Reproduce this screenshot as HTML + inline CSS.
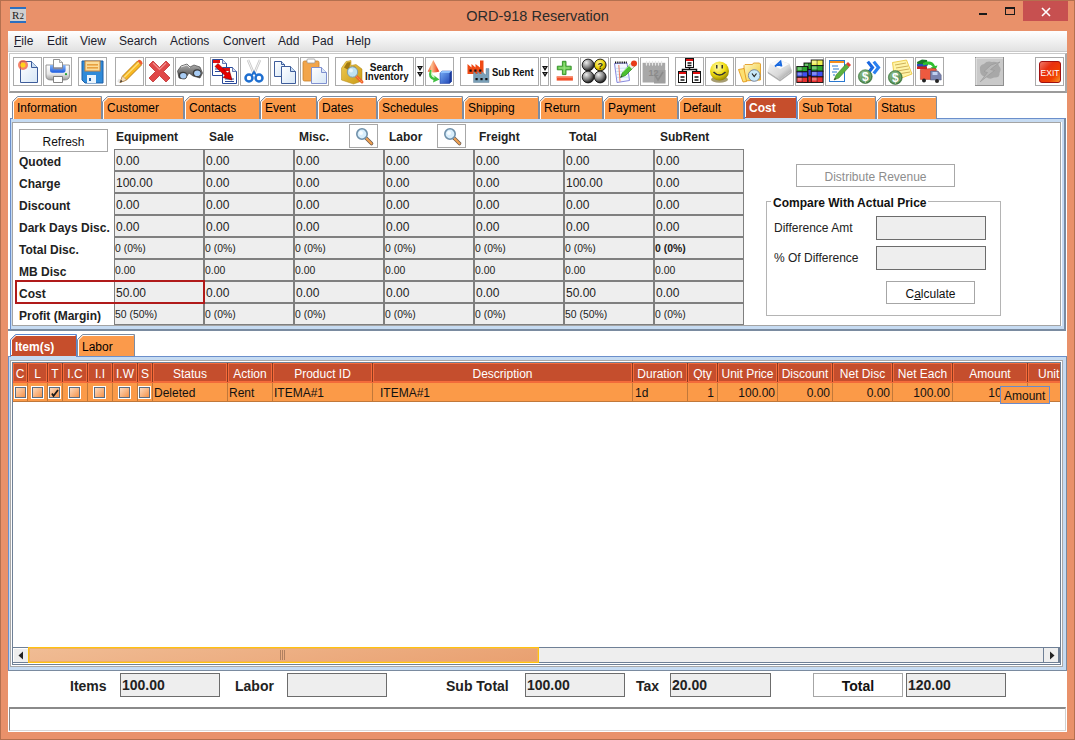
<!DOCTYPE html>
<html><head><meta charset="utf-8"><style>
*{margin:0;padding:0;box-sizing:border-box}
html,body{width:1075px;height:740px;overflow:hidden;background:#fff;font-family:"Liberation Sans",sans-serif;font-size:12px;color:#000}
.a{position:absolute}
.t{position:absolute;white-space:nowrap;line-height:1}
svg{position:absolute}
</style></head><body>
<div class="a" style="left:0px;top:0px;width:1075px;height:740px;background:#e9916a;border:1px solid #b4704f"></div>
<div class="t" style="left:0px;top:1px;width:1075px;text-align:center;font-size:14.5px;line-height:31px;color:#2b2b2b">ORD-918 Reservation</div>
<div class="a" style="left:1023px;top:1px;width:45px;height:20px;background:#c75050"></div>
<svg class="a" style="left:0;top:0" width="1075" height="31"><rect x="979" y="13" width="8" height="2" fill="#1a1a1a"/><rect x="1005.5" y="7.5" width="9" height="7" fill="none" stroke="#1a1a1a" stroke-width="1"/><rect x="1005" y="7" width="10" height="2" fill="#1a1a1a"/><path d="M1042 8 L1050 16 M1050 8 L1042 16" stroke="#fff" stroke-width="1.6"/></svg>
<div class="a" style="left:10px;top:7px;width:16px;height:16px;background:#d0d0d0;border-top:2px solid #2a6fc0;border-bottom:2px solid #2a6fc0;font-family:'Liberation Serif';font-size:11px;line-height:12px;color:#222;text-align:center">R<span style="font-size:9px">2</span></div>
<div class="a" style="left:8px;top:31px;width:1059px;height:20px;background:linear-gradient(#ffffff,#e2e2e2)"></div>
<div class="t" style="left:14px;top:35px;font-size:12px;color:#1c1c2c"><u>F</u>ile</div>
<div class="t" style="left:47px;top:35px;font-size:12px;color:#1c1c2c">Edit</div>
<div class="t" style="left:80px;top:35px;font-size:12px;color:#1c1c2c">View</div>
<div class="t" style="left:119px;top:35px;font-size:12px;color:#1c1c2c">Search</div>
<div class="t" style="left:170px;top:35px;font-size:12px;color:#1c1c2c">Actions</div>
<div class="t" style="left:223px;top:35px;font-size:12px;color:#1c1c2c">Convert</div>
<div class="t" style="left:278px;top:35px;font-size:12px;color:#1c1c2c">Add</div>
<div class="t" style="left:312px;top:35px;font-size:12px;color:#1c1c2c">Pad</div>
<div class="t" style="left:346px;top:35px;font-size:12px;color:#1c1c2c">Help</div>
<div class="a" style="left:8px;top:51px;width:1059px;height:1px;background:#c9c9c9"></div>
<div class="a" style="left:8px;top:52px;width:1059px;height:680px;background:#fff"></div>
<div class="a" style="left:9px;top:53px;width:1058px;height:40px;border:1px solid #c9c9c9;border-right:2px solid #a9a9a9;border-bottom:2px solid #9b9b9b;background:#fff"></div>
<svg width="0" height="0" style="position:absolute"><defs><linearGradient id="gdoc" x1="0" y1="0" x2="1" y2="1"><stop offset="0" stop-color="#ffffff"/><stop offset="1" stop-color="#d6e6f6"/></linearGradient><radialGradient id="gball" cx="0.35" cy="0.3" r="0.7"><stop offset="0" stop-color="#f0f0f0"/><stop offset="0.6" stop-color="#808080"/><stop offset="1" stop-color="#202020"/></radialGradient><radialGradient id="gyel" cx="0.4" cy="0.35" r="0.7"><stop offset="0" stop-color="#fff7a0"/><stop offset="0.6" stop-color="#e8d000"/><stop offset="1" stop-color="#8a7000"/></radialGradient><radialGradient id="gsmile" cx="0.4" cy="0.3" r="0.75"><stop offset="0" stop-color="#fffbb0"/><stop offset="0.55" stop-color="#f0dc10"/><stop offset="1" stop-color="#8a7a00"/></radialGradient><radialGradient id="gdollar" cx="0.4" cy="0.35" r="0.7"><stop offset="0" stop-color="#8ec08e"/><stop offset="1" stop-color="#3e7a3e"/></radialGradient><linearGradient id="gexit" x1="0" y1="0" x2="1" y2="1"><stop offset="0" stop-color="#f08070"/><stop offset="0.35" stop-color="#e83010"/><stop offset="0.7" stop-color="#f04000"/><stop offset="1" stop-color="#f8a030"/></linearGradient><linearGradient id="gpeach" x1="0" y1="0" x2="1" y2="1"><stop offset="0" stop-color="#fde6d0"/><stop offset="1" stop-color="#f28636"/></linearGradient></defs></svg>
<div class="a" style="left:13px;top:57px;width:29px;height:29px;border:1px solid #ababab;background:#fff"></div>
<svg style="left:13px;top:57px" width="29" height="29" viewBox="0 0 29 29"><path d="M7.5 4.5H18.5L24.5 10.5V25.5H7.5Z" fill="url(#gdoc)" stroke="#3d5c9a"/><path d="M18.5 4.5V10.5H24.5" fill="#c9def2" stroke="#3d5c9a"/><circle cx="10" cy="8" r="5" fill="#f25a3a" opacity="0.75"/><circle cx="10" cy="8" r="2.6" fill="#ffd21a"/></svg>
<div class="a" style="left:43px;top:57px;width:29px;height:29px;border:1px solid #ababab;background:#fff"></div>
<svg style="left:43px;top:57px" width="29" height="29" viewBox="0 0 29 29"><defs><linearGradient id="gprn" x1="0" y1="0" x2="0" y2="1"><stop offset="0" stop-color="#ffffff"/><stop offset="0.6" stop-color="#e8e8e8"/><stop offset="1" stop-color="#9a9a9a"/></linearGradient><linearGradient id="gtray" x1="0" y1="0" x2="0" y2="1"><stop offset="0" stop-color="#8ab8f8"/><stop offset="1" stop-color="#1a5ae0"/></linearGradient></defs><path d="M3 8H26.4V19Q26.4 23 21 23H8Q3 23 3 19Z" fill="url(#gprn)" stroke="#808080" stroke-width="0.8"/><path d="M7 8H22.6V13Q22.6 15.7 20 15.7H9.6Q7 15.7 7 13Z" fill="url(#gtray)"/><path d="M10.5 2.5H16.5L19.5 5.5V11H10.5Z" fill="#fff" stroke="#777" stroke-width="0.8"/><path d="M16.5 2.5V5.5H19.5" fill="#e8e8e8" stroke="#777" stroke-width="0.6"/><rect x="10.5" y="10.5" width="9" height="1.8" fill="#8a8a9a"/><path d="M10.5 19.5H19.5V25.5H10.5Z" fill="#fff" stroke="#666" stroke-width="0.8"/><circle cx="23" cy="17.2" r="1.1" fill="#20a030"/></svg>
<div class="a" style="left:78px;top:57px;width:29px;height:29px;border:1px solid #ababab;background:#fff"></div>
<svg style="left:78px;top:57px" width="29" height="29" viewBox="0 0 29 29"><path d="M4 4H25V26H7L4 23Z" fill="#2f8ad8" stroke="#1d5fa8"/><rect x="7" y="4" width="15" height="10" fill="#fbdc9a" stroke="#c8843a"/><rect x="9" y="7" width="11" height="1.6" fill="#e8a040"/><rect x="9" y="10" width="11" height="1.6" fill="#e8a040"/><rect x="9" y="18" width="9" height="8" fill="#eaf4fc"/><rect x="11" y="21" width="2" height="3" fill="#1d5fa8"/></svg>
<div class="a" style="left:115px;top:57px;width:29px;height:29px;border:1px solid #ababab;background:#fff"></div>
<svg style="left:115px;top:57px" width="29" height="29" viewBox="0 0 29 29"><path d="M5.5 25L3 23" stroke="#ccc" stroke-width="3" opacity="0.5"/><path d="M5 25.5L7.5 19L22.5 4L26.5 8L11.5 23Z" fill="#f8b820" stroke="#a86808" stroke-width="0.8"/><path d="M9 20.5L24 5.5" stroke="#fde080" stroke-width="1.2"/><path d="M5 25.5L7.5 19L11.5 23Z" fill="#f4dcb8" stroke="#a08060" stroke-width="0.5"/><path d="M5 25.5L6 23L7.5 24.2Z" fill="#222"/><path d="M22.5 4L26.5 8L27.5 6.5Q27.5 4.5 26 3.5Q24.5 2.5 23.5 3Z" fill="#f05a30"/></svg>
<div class="a" style="left:145px;top:57px;width:29px;height:29px;border:1px solid #ababab;background:#fff"></div>
<svg style="left:145px;top:57px" width="29" height="29" viewBox="0 0 29 29"><path d="M4 8L8 4L14.5 10.5L21 4L25 8L18.5 14.5L25 21L21 25L14.5 18.5L8 25L4 21L10.5 14.5Z" fill="#e04848" stroke="#c03030" stroke-width="0.8"/><path d="M8 6L14.5 12.5L21 6" stroke="#f29090" stroke-width="1.2" fill="none"/></svg>
<div class="a" style="left:175px;top:57px;width:29px;height:29px;border:1px solid #ababab;background:#fff"></div>
<svg style="left:175px;top:57px" width="29" height="29" viewBox="0 0 29 29"><defs><linearGradient id="gbin" x1="0" y1="0" x2="0" y2="1"><stop offset="0" stop-color="#b0b0b0"/><stop offset="1" stop-color="#404040"/></linearGradient></defs><path d="M2.5 14L6 9L12 7L15 10L19 8L25 10L27.5 16L25 21L18 19L14 16L10 22L4 21Z" fill="url(#gbin)" stroke="#333" stroke-width="0.6"/><ellipse cx="8" cy="18.5" rx="4.2" ry="3.8" fill="#3a3a3a"/><ellipse cx="8.3" cy="18.8" rx="3.2" ry="2.8" fill="#a8ccf4"/><ellipse cx="22" cy="16" rx="4.2" ry="3.8" fill="#3a3a3a"/><ellipse cx="22.3" cy="16.3" rx="3.2" ry="2.8" fill="#a8ccf4"/><path d="M6 10L12 8L15 11" stroke="#ddd" stroke-width="1" fill="none"/></svg>
<div class="a" style="left:210px;top:57px;width:29px;height:29px;border:1px solid #ababab;background:#fff"></div>
<svg style="left:210px;top:57px" width="29" height="29" viewBox="0 0 29 29"><path d="M2.5 2.5H12.5L16.5 6.5V18.5H2.5Z" fill="#fff" stroke="#2a4a9a"/><path d="M12.5 2.5V6.5H16.5" fill="#dde" stroke="#2a4a9a" stroke-width="0.7"/><rect x="3" y="3" width="7" height="3" fill="#e01010"/><path d="M12.5 10.5H22.5L26.5 14.5V26.5H12.5Z" fill="#fff" stroke="#2a4a9a"/><path d="M22.5 10.5V14.5H26.5" fill="#dde" stroke="#2a4a9a" stroke-width="0.7"/><rect x="13" y="11" width="7" height="3" fill="#e01010"/><path d="M5 12H10M5 14.5H10M15 22H24M15 24.5H24" stroke="#2a4a9a" stroke-width="1"/><path d="M5 9.5L8 6.5L17.5 16L19.5 14L22 23L13 20.5L15 18.5Z" fill="#e80000" stroke="#700" stroke-width="0.6"/></svg>
<div class="a" style="left:240px;top:57px;width:29px;height:29px;border:1px solid #ababab;background:#fff"></div>
<svg style="left:240px;top:57px" width="29" height="29" viewBox="0 0 29 29"><path d="M8 3L14 17M20 3L14 17" stroke="#c8c8c8" stroke-width="2.5"/><path d="M8 3L14 17M20 3L14 17" stroke="#f4f4f4" stroke-width="1"/><circle cx="9" cy="21" r="3.5" fill="none" stroke="#1e6fd0" stroke-width="2.5"/><circle cx="19" cy="21" r="3.5" fill="none" stroke="#1e6fd0" stroke-width="2.5"/><path d="M12 18L14 15L16 18" stroke="#1e6fd0" stroke-width="2" fill="none"/></svg>
<div class="a" style="left:270px;top:57px;width:29px;height:29px;border:1px solid #ababab;background:#fff"></div>
<svg style="left:270px;top:57px" width="29" height="29" viewBox="0 0 29 29"><path d="M4.5 4.5H11.5L14.5 7.5V19.5H4.5Z" fill="url(#gdoc)" stroke="#3d5c9a"/><path d="M11.5 4.5V7.5H14.5" fill="#c9def2" stroke="#3d5c9a"/><path d="M11.5 9.5H20.5L25.5 14.5V26.5H11.5Z" fill="url(#gdoc)" stroke="#3d5c9a"/><path d="M20.5 9.5V14.5H25.5" fill="#c9def2" stroke="#3d5c9a"/></svg>
<div class="a" style="left:300px;top:57px;width:29px;height:29px;border:1px solid #ababab;background:#fff"></div>
<svg style="left:300px;top:57px" width="29" height="29" viewBox="0 0 29 29"><rect x="3" y="4" width="16" height="20" rx="1.5" fill="#f2a54a" stroke="#c8822a" stroke-width="0.8"/><rect x="7" y="2" width="8" height="4" rx="1" fill="#fff" stroke="#999" stroke-width="0.8"/><path d="M11.5 10.5H21.5L26.5 15.5V26.5H11.5Z" fill="url(#gdoc)" stroke="#7f90d0"/><path d="M21.5 10.5V15.5H26.5" fill="#dde8f8" stroke="#7f90d0"/></svg>
<div class="a" style="left:335px;top:57px;width:79px;height:29px;border:1px solid #ababab;background:#fff"></div>
<svg style="left:335px;top:57px" width="79" height="29" viewBox="0 0 79 29"><defs><linearGradient id="gbox" x1="0" y1="0" x2="1" y2="1"><stop offset="0" stop-color="#f2cc50"/><stop offset="1" stop-color="#c89a18"/></linearGradient></defs><path d="M6.5 11L11 4.5L16 3.5L16 8.5L21 7.5L27 12V24L18.5 27L6.5 23Z" fill="url(#gbox)" stroke="#b08510" stroke-width="0.5"/><path d="M9 10.5L12 5.5L15.5 5L14.5 10L20 9.5L22 12L15 14Z" fill="#a07810"/><path d="M21.5 19.5L27 25" stroke="#f06030" stroke-width="3" stroke-linecap="round"/><path d="M21.5 19.5L27 25" stroke="#f8c040" stroke-width="1" stroke-dasharray="1.5 1.5"/><circle cx="17.5" cy="15" r="5.2" fill="#bfe2f2" stroke="#7a98a8" stroke-width="0.9"/><circle cx="16" cy="13.5" r="2" fill="#e8f6fc"/><text x="51.5" y="13.5" font-family="Liberation Sans" font-weight="bold" font-size="10" text-anchor="middle" fill="#111">Search</text><text x="51.8" y="23" font-family="Liberation Sans" font-weight="bold" font-size="10" text-anchor="middle" fill="#111" textLength="43.5" lengthAdjust="spacingAndGlyphs">Inventory</text></svg>
<div class="a" style="left:415px;top:57px;width:9px;height:29px;border:1px solid #ababab;background:#fff"></div>
<svg style="left:415px;top:57px" width="9" height="29" viewBox="0 0 9 29"><path d="M2 9H8L5 14Z M2 15H8L5 20Z" fill="#111"/><circle cx="5" cy="10.6" r="0.7" fill="#ccc"/><circle cx="5" cy="16.6" r="0.7" fill="#ccc"/></svg>
<div class="a" style="left:425px;top:57px;width:29px;height:29px;border:1px solid #ababab;background:#fff"></div>
<svg style="left:425px;top:57px" width="29" height="29" viewBox="0 0 29 29"><defs><linearGradient id="gcone" x1="0" y1="0" x2="1" y2="0"><stop offset="0" stop-color="#f05020"/><stop offset="0.35" stop-color="#fcc090"/><stop offset="1" stop-color="#e82a08"/></linearGradient><linearGradient id="gcube" x1="0" y1="0" x2="1" y2="1"><stop offset="0" stop-color="#7ab0f8"/><stop offset="1" stop-color="#1a40b0"/></linearGradient></defs><path d="M8.3 3L2.7 14.5Q8.5 16.5 14.3 14.5Z" fill="url(#gcone)"/><path d="M6.5 13Q4.5 19 9.5 21L9 18.5L14.5 22.5L8 25.5L8.5 23Q2 21 5 13Z" fill="#40c040"/><path d="M6.5 13Q5.5 18 10 20" stroke="#90f080" stroke-width="0.8" fill="none"/><path d="M15 16L17 14H26.5V24.5L24.5 26.5H15Z" fill="url(#gcube)" stroke="#1a3aa0" stroke-width="0.5"/><path d="M15 16L17 14H26.5L24.5 16Z" fill="#8ec0fc"/><path d="M24.5 16V26.5L26.5 24.5V14Z" fill="#1a3898"/></svg>
<div class="a" style="left:460px;top:57px;width:79px;height:29px;border:1px solid #ababab;background:#fff"></div>
<svg style="left:460px;top:57px" width="79" height="29" viewBox="0 0 79 29"><path d="M7.5 17V7L11.5 10.5V7L15.5 10.5V7L20 10.5V3.5H23.5V17Z" fill="#f04a14"/><rect x="9.5" y="12.5" width="2.2" height="2.2" fill="#111"/><rect x="14.3" y="12.5" width="2.2" height="2.2" fill="#111"/><rect x="19.2" y="12.5" width="2.2" height="2.2" fill="#111"/><path d="M13.5 25.5V14.5L17.5 18V14.5L21.5 18V14.5L26 18V11.5H29V25.5Z" fill="#7aa0b8" stroke="#5a7a90" stroke-width="0.4"/><rect x="15.5" y="21" width="2.2" height="2.2" fill="#111"/><rect x="20.4" y="21" width="2.2" height="2.2" fill="#111"/><rect x="25.3" y="21" width="2.2" height="2.2" fill="#111"/><text x="52.8" y="18.8" font-family="Liberation Sans" font-weight="bold" font-size="10" text-anchor="middle" fill="#111" textLength="41.5" lengthAdjust="spacingAndGlyphs">Sub Rent</text></svg>
<div class="a" style="left:540px;top:57px;width:9px;height:29px;border:1px solid #ababab;background:#fff"></div>
<svg style="left:540px;top:57px" width="9" height="29" viewBox="0 0 9 29"><path d="M2 9H8L5 14Z M2 15H8L5 20Z" fill="#111"/><circle cx="5" cy="10.6" r="0.7" fill="#ccc"/><circle cx="5" cy="16.6" r="0.7" fill="#ccc"/></svg>
<div class="a" style="left:550px;top:57px;width:29px;height:29px;border:1px solid #ababab;background:#fff"></div>
<svg style="left:550px;top:57px" width="29" height="29" viewBox="0 0 29 29"><path d="M12.4 4.3H16V9.2H21.2V12.8H16V17.6H12.4V12.8H7.3V9.2H12.4Z" fill="#6acc50" stroke="#2e8a22" stroke-width="0.9"/><path d="M14.2 6V16M9 11H19.5" stroke="#a8e890" stroke-width="0.8"/><rect x="6.7" y="19.4" width="16.2" height="4.2" fill="#f2502a"/><rect x="6.7" y="19.4" width="16.2" height="1.4" fill="#f89070"/></svg>
<div class="a" style="left:580px;top:57px;width:29px;height:29px;border:1px solid #ababab;background:#fff"></div>
<svg style="left:580px;top:57px" width="29" height="29" viewBox="0 0 29 29"><circle cx="8.1" cy="8" r="5.9" fill="url(#gball)" stroke="#111" stroke-width="0.9"/><circle cx="20.2" cy="8" r="5.9" fill="url(#gyel)" stroke="#111" stroke-width="0.9"/><circle cx="8.1" cy="20" r="5.9" fill="url(#gball)" stroke="#111" stroke-width="0.9"/><circle cx="20.2" cy="20" r="5.9" fill="url(#gball)" stroke="#111" stroke-width="0.9"/><text x="20.2" y="11.5" font-family="Liberation Sans" font-weight="bold" font-size="9" text-anchor="middle" fill="#222">?</text></svg>
<div class="a" style="left:610px;top:57px;width:29px;height:29px;border:1px solid #ababab;background:#fff"></div>
<svg style="left:610px;top:57px" width="29" height="29" viewBox="0 0 29 29"><path d="M4.5 6.5L17 6L19.5 23.5L7 25.5Z" fill="#f4f8ff" stroke="#7a7ad8" stroke-width="0.9"/><path d="M6 11.5L18 11M6.3 14.5L18.3 14M6.6 17.5L18.6 17M7 20.5L19 20" stroke="#b8d8f0" stroke-width="0.7"/><path d="M8.8 8L10 24.5" stroke="#f07050" stroke-width="0.9"/><path d="M5 5.5H17" stroke="#111" stroke-width="2" stroke-dasharray="1 0.8"/><path d="M10.5 20.5L12.5 15.5L21 6.5L24.5 9.5L15.5 18.5Z" fill="#4ac030" stroke="#1a7010" stroke-width="0.6"/><path d="M12.5 15.5L21 7" stroke="#a0f080" stroke-width="0.8"/><path d="M21 6.5L24.5 9.5L22 12L19 9Z" fill="#eee"/><circle cx="24" cy="6.5" r="3" fill="#e83a1a"/><path d="M10.5 20.5L11.3 18.5L12.5 19.5Z" fill="#333"/></svg>
<div class="a" style="left:640px;top:57px;width:29px;height:29px;border:1px solid #ababab;background:#fff"></div>
<svg style="left:640px;top:57px" width="29" height="29" viewBox="0 0 29 29"><rect x="2.6" y="5.8" width="22.6" height="19.7" fill="#a8a8a8"/><rect x="14" y="13" width="11.5" height="13.5" fill="#9e9e9e"/><path d="M6.5 4.5V8M9.5 4.5V8M12.5 4.5V8M15.5 4.5V8M18.5 4.5V8M21.5 4.5V8" stroke="#e8e8e8" stroke-width="1.3" stroke-linecap="round"/><text x="13.5" y="19" font-family="Liberation Sans" font-weight="bold" font-size="9" text-anchor="middle" fill="#8a8a8a">12</text><path d="M15.5 19L18 23L23 15" stroke="#8a8a8a" stroke-width="1.5" fill="none"/></svg>
<div class="a" style="left:675px;top:57px;width:29px;height:29px;border:1px solid #ababab;background:#fff"></div>
<svg style="left:675px;top:57px" width="29" height="29" viewBox="0 0 29 29"><path d="M14.5 10V12.5M7.5 14.5V12.5H21.5V14.5" stroke="#111" stroke-width="1.5" fill="none"/><rect x="10.5" y="1.5" width="8" height="9" fill="#fff" stroke="#111"/><rect x="11" y="2" width="7" height="2" fill="#e01010"/><rect x="3.5" y="14.5" width="8" height="11" fill="#fff" stroke="#111"/><rect x="4" y="15" width="7" height="2" fill="#e01010"/><rect x="17.5" y="14.5" width="8" height="11" fill="#fff" stroke="#111"/><rect x="18" y="15" width="7" height="2" fill="#e01010"/><path d="M12.5 6H16.5M12.5 8.5H16.5M5.5 20H9.5M5.5 23H9.5M19.5 20H23.5M19.5 23H23.5" stroke="#111" stroke-width="1.3"/></svg>
<div class="a" style="left:705px;top:57px;width:29px;height:29px;border:1px solid #ababab;background:#fff"></div>
<svg style="left:705px;top:57px" width="29" height="29" viewBox="0 0 29 29"><ellipse cx="14.5" cy="22.5" rx="8.5" ry="3.2" fill="#6a5a10" opacity="0.6"/><circle cx="14.5" cy="14" r="9.5" fill="url(#gsmile)"/><rect x="11" y="8" width="1.5" height="3.5" fill="#333"/><rect x="16.5" y="8" width="1.5" height="3.5" fill="#333"/><path d="M8.5 15Q14.5 21 20.5 15" stroke="#333" stroke-width="1.5" fill="none"/></svg>
<div class="a" style="left:735px;top:57px;width:29px;height:29px;border:1px solid #ababab;background:#fff"></div>
<svg style="left:735px;top:57px" width="29" height="29" viewBox="0 0 29 29"><defs><linearGradient id="gfold" x1="0" y1="0" x2="1" y2="1"><stop offset="0" stop-color="#fff8c8"/><stop offset="1" stop-color="#f0c830"/></linearGradient></defs><path d="M9 24V8.5L10 7.5H17.5L18.5 6H24.5L25.5 7V23Z" fill="url(#gfold)" stroke="#e09010" stroke-width="0.8"/><path d="M3.5 12.5L9 11.5L11.5 24.5L8 25Z" fill="#fce070" stroke="#e09010" stroke-width="0.8"/><circle cx="19.2" cy="18.5" r="5.8" fill="#c8e8fa" stroke="#7a88a0" stroke-width="1"/><path d="M17 16.5L19.2 19.5L21.5 16.5" stroke="#222" stroke-width="1.2" fill="none"/></svg>
<div class="a" style="left:765px;top:57px;width:29px;height:29px;border:1px solid #ababab;background:#fff"></div>
<svg style="left:765px;top:57px" width="29" height="29" viewBox="0 0 29 29"><defs><linearGradient id="gkey" x1="0" y1="0" x2="1" y2="1"><stop offset="0" stop-color="#f8f8f8"/><stop offset="0.6" stop-color="#d8d8d8"/><stop offset="1" stop-color="#8a8a8a"/></linearGradient></defs><path d="M2.5 14.5L5 6.5L13.5 2.7L24.5 6.8L27 14L15 22.5Z" fill="url(#gkey)"/><path d="M2.5 14.5L15 22.5L27 14L26.5 16L15 24.5L3 16.5Z" fill="#b0b0b0"/><path d="M5 6.8L13.5 2.9L24.3 6.9L15.3 12Z" fill="#fafafa"/><path d="M10 9.5L15.5 4.5L16.5 9.5M12 8H16" stroke="#1a6ae0" stroke-width="1.8" fill="none"/></svg>
<div class="a" style="left:795px;top:57px;width:29px;height:29px;border:1px solid #ababab;background:#fff"></div>
<svg style="left:795px;top:57px" width="29" height="29" viewBox="0 0 29 29"><rect x="9" y="6.0" width="9" height="6.5" fill="#22a022" stroke="#111" stroke-width="0.9"/><rect x="9.8" y="6.8" width="4.0" height="3.2" fill="#fff" opacity="0.35"/><path d="M13.5 6.0V12.5" stroke="#111" stroke-width="0.5"/><rect x="9" y="12.5" width="9" height="6.5" fill="#3040e0" stroke="#111" stroke-width="0.9"/><rect x="9.8" y="13.3" width="4.0" height="3.2" fill="#fff" opacity="0.35"/><path d="M13.5 12.5V19.0" stroke="#111" stroke-width="0.5"/><rect x="9" y="19.0" width="9" height="6.5" fill="#e02020" stroke="#111" stroke-width="0.9"/><rect x="9.8" y="19.8" width="4.0" height="3.2" fill="#fff" opacity="0.35"/><path d="M13.5 19.0V25.5" stroke="#111" stroke-width="0.5"/><rect x="1.8" y="9.5" width="10.8" height="5.3" fill="#2aa82a" stroke="#111" stroke-width="0.9"/><rect x="2.6" y="10.3" width="4.9" height="2.7" fill="#fff" opacity="0.35"/><path d="M7.2 9.5V14.8" stroke="#111" stroke-width="0.5"/><rect x="1.8" y="14.8" width="10.8" height="5.3" fill="#4050f0" stroke="#111" stroke-width="0.9"/><rect x="2.6" y="15.6" width="4.9" height="2.7" fill="#fff" opacity="0.35"/><path d="M7.2 14.8V20.2" stroke="#111" stroke-width="0.5"/><rect x="1.8" y="20.2" width="10.8" height="5.3" fill="#e83030" stroke="#111" stroke-width="0.9"/><rect x="2.6" y="21.0" width="4.9" height="2.7" fill="#fff" opacity="0.35"/><path d="M7.2 20.2V25.5" stroke="#111" stroke-width="0.5"/><rect x="16.2" y="3.0" width="11.8" height="5.6" fill="#f0f050" stroke="#111" stroke-width="0.9"/><rect x="17.0" y="3.8" width="5.3" height="2.8" fill="#fff" opacity="0.35"/><path d="M22.1 3.0V8.6" stroke="#111" stroke-width="0.5"/><rect x="16.2" y="8.6" width="11.8" height="5.6" fill="#30a830" stroke="#111" stroke-width="0.9"/><rect x="17.0" y="9.4" width="5.3" height="2.8" fill="#fff" opacity="0.35"/><path d="M22.1 8.6V14.2" stroke="#111" stroke-width="0.5"/><rect x="16.2" y="14.2" width="11.8" height="5.6" fill="#4050f0" stroke="#111" stroke-width="0.9"/><rect x="17.0" y="15.1" width="5.3" height="2.8" fill="#fff" opacity="0.35"/><path d="M22.1 14.2V19.9" stroke="#111" stroke-width="0.5"/><rect x="16.2" y="19.9" width="11.8" height="5.6" fill="#e83030" stroke="#111" stroke-width="0.9"/><rect x="17.0" y="20.7" width="5.3" height="2.8" fill="#fff" opacity="0.35"/><path d="M22.1 19.9V25.5" stroke="#111" stroke-width="0.5"/></svg>
<div class="a" style="left:825px;top:57px;width:29px;height:29px;border:1px solid #ababab;background:#fff"></div>
<svg style="left:825px;top:57px" width="29" height="29" viewBox="0 0 29 29"><rect x="4.5" y="3.5" width="15" height="21" fill="#fff" stroke="#2a78d0"/><rect x="5" y="4" width="14" height="2" fill="#f89020"/><path d="M7 9H13M8 12H14M7 15H12M8 18H10" stroke="#2a78d0" stroke-width="1"/><path d="M9 23L11 18L21 7L24 10L14 21Z" fill="#5ab040" stroke="#3a7020" stroke-width="0.5"/><path d="M21 7L24 10L26 8L23 5Z" fill="#e04030"/><path d="M9 23L10 21L11 22Z" fill="#222"/></svg>
<div class="a" style="left:855px;top:57px;width:29px;height:29px;border:1px solid #ababab;background:#fff"></div>
<svg style="left:855px;top:57px" width="29" height="29" viewBox="0 0 29 29"><path d="M11.5 5.5L14 3.8L19.5 10.5L14 17.5L11.5 15.5L15.5 10.5Z" fill="#1a68e0"/><path d="M17.5 5.5L20 3.8L25.5 10.5L20 17.5L17.5 15.5L21.5 10.5Z" fill="#2a80f0"/><circle cx="10.3" cy="19.6" r="6.9" fill="url(#gdollar)" stroke="#2e6a2e" stroke-width="0.6"/><circle cx="10.3" cy="19.6" r="5.3" fill="none" stroke="#9ac89a" stroke-width="0.6" opacity="0.7"/><text x="10.3" y="23.900000000000002" font-family="Liberation Sans" font-weight="bold" font-size="12" text-anchor="middle" fill="#fff">$</text></svg>
<div class="a" style="left:885px;top:57px;width:29px;height:29px;border:1px solid #ababab;background:#fff"></div>
<svg style="left:885px;top:57px" width="29" height="29" viewBox="0 0 29 29"><path d="M7.5 5.5L21.5 3L27 17L14 22L9 17Z" fill="#fff4a8" stroke="#e8c030" stroke-width="0.8"/><path d="M10 8L21 6M11 11L23 9M12 14L24 12M13 17L25 15" stroke="#c8a850" stroke-width="0.9"/><circle cx="10.3" cy="20.5" r="6.9" fill="url(#gdollar)" stroke="#2e6a2e" stroke-width="0.6"/><circle cx="10.3" cy="20.5" r="5.3" fill="none" stroke="#9ac89a" stroke-width="0.6" opacity="0.7"/><text x="10.3" y="24.8" font-family="Liberation Sans" font-weight="bold" font-size="12" text-anchor="middle" fill="#fff">$</text></svg>
<div class="a" style="left:915px;top:57px;width:29px;height:29px;border:1px solid #ababab;background:#fff"></div>
<svg style="left:915px;top:57px" width="29" height="29" viewBox="0 0 29 29"><path d="M2 5L7 2.5L12 3L13 8L9 11.5L3 12Z" fill="#1a7a28"/><rect x="2" y="7" width="10" height="2.5" fill="#2848c0"/><rect x="2" y="9.5" width="10" height="2.5" fill="#d02020"/><path d="M8 6Q17 2 20 9L22.5 8.5L20 14L15.5 10.5L17.8 10Q15.5 6 8 8.5Z" fill="#30c030"/><path d="M5.4 12.5L19 11.2L21.3 12V22.4H5.4Z" fill="#ee5a40" stroke="#a03020" stroke-width="0.5"/><path d="M15.5 14H23L26.2 18V23H15.5Z" fill="#7a84b0" stroke="#4a5070" stroke-width="0.5"/><rect x="17.5" y="15" width="5" height="3" fill="#c0d0f0"/><circle cx="9" cy="23.5" r="2" fill="#222"/><circle cx="22" cy="24" r="2" fill="#222"/></svg>
<div class="a" style="left:975px;top:57px;width:29px;height:29px;border:1px solid #8f8f8f;background:#c9c9c9"></div>
<svg style="left:975px;top:57px" width="29" height="29" viewBox="0 0 29 29"><path d="M1 28V1H28" stroke="#f0f0f0" stroke-width="1" fill="none"/><path d="M5 13Q4 8 9 7Q12 3.5 17 5Q23 4 24 9Q27 12 24.5 16Q25 21 19 20.5Q15 23 11 20Q5 19 5 13Z" fill="#a8a8a8"/><path d="M25 5L15.5 12.5L19.5 13.5L5.3 24.7L12.5 15.5L9 14.5L16 8Z" fill="#b8b8b8" stroke="#9a9a9a" stroke-width="0.7"/></svg>
<div class="a" style="left:1035px;top:57px;width:29px;height:29px;border:1px solid #ababab;background:#fff"></div>
<svg style="left:1035px;top:57px" width="29" height="29" viewBox="0 0 29 29"><rect x="4.5" y="4.5" width="21" height="21" rx="2.5" fill="url(#gexit)" stroke="#a01010"/><text x="15" y="19.2" font-family="Liberation Sans" font-size="9.6" text-anchor="middle" fill="#fff" textLength="19" lengthAdjust="spacingAndGlyphs">EXIT</text></svg>
<div class="a" style="left:10px;top:118px;width:1056px;height:213px;background:#c6dbf2;border-left:1px solid #6b8fcb;border-top:1px solid #6b8fcb;border-right:2px solid #7a8ba0;border-bottom:2px solid #7a8ba0"></div>
<div class="a" style="left:8px;top:329px;width:2px;height:2px;background:#7a8ba0"></div>
<div class="a" style="left:12px;top:122px;width:1049px;height:204px;background:#fff;border:1px solid #a4a4a4"></div>
<div class="a" style="left:1061px;top:122px;width:1px;height:204px;background:#fff"></div>
<svg style="left:12px;top:96px" width="90" height="23" viewBox="0 0 90 23"><path d="M1 23V6L6 1H89V23Z" fill="#fb9a4b"/><path d="M1.5 23V6L6 1.5H88.5" fill="none" stroke="#fff" stroke-width="1"/><path d="M0.5 23V5.5L5.5 0.5H89.5V23" fill="none" stroke="#7b8ca3" stroke-width="1"/></svg>
<div class="t" style="left:17px;top:102px;color:#000;font-weight:normal;font-size:12px">Information</div>
<svg style="left:102px;top:96px" width="82" height="23" viewBox="0 0 82 23"><path d="M1 23V6L6 1H81V23Z" fill="#fb9a4b"/><path d="M1.5 23V6L6 1.5H80.5" fill="none" stroke="#fff" stroke-width="1"/><path d="M0.5 23V5.5L5.5 0.5H81.5V23" fill="none" stroke="#7b8ca3" stroke-width="1"/></svg>
<div class="t" style="left:107px;top:102px;color:#000;font-weight:normal;font-size:12px">Customer</div>
<svg style="left:184px;top:96px" width="76" height="23" viewBox="0 0 76 23"><path d="M1 23V6L6 1H75V23Z" fill="#fb9a4b"/><path d="M1.5 23V6L6 1.5H74.5" fill="none" stroke="#fff" stroke-width="1"/><path d="M0.5 23V5.5L5.5 0.5H75.5V23" fill="none" stroke="#7b8ca3" stroke-width="1"/></svg>
<div class="t" style="left:189px;top:102px;color:#000;font-weight:normal;font-size:12px">Contacts</div>
<svg style="left:260px;top:96px" width="57" height="23" viewBox="0 0 57 23"><path d="M1 23V6L6 1H56V23Z" fill="#fb9a4b"/><path d="M1.5 23V6L6 1.5H55.5" fill="none" stroke="#fff" stroke-width="1"/><path d="M0.5 23V5.5L5.5 0.5H56.5V23" fill="none" stroke="#7b8ca3" stroke-width="1"/></svg>
<div class="t" style="left:265px;top:102px;color:#000;font-weight:normal;font-size:12px">Event</div>
<svg style="left:317px;top:96px" width="60" height="23" viewBox="0 0 60 23"><path d="M1 23V6L6 1H59V23Z" fill="#fb9a4b"/><path d="M1.5 23V6L6 1.5H58.5" fill="none" stroke="#fff" stroke-width="1"/><path d="M0.5 23V5.5L5.5 0.5H59.5V23" fill="none" stroke="#7b8ca3" stroke-width="1"/></svg>
<div class="t" style="left:322px;top:102px;color:#000;font-weight:normal;font-size:12px">Dates</div>
<svg style="left:377px;top:96px" width="86" height="23" viewBox="0 0 86 23"><path d="M1 23V6L6 1H85V23Z" fill="#fb9a4b"/><path d="M1.5 23V6L6 1.5H84.5" fill="none" stroke="#fff" stroke-width="1"/><path d="M0.5 23V5.5L5.5 0.5H85.5V23" fill="none" stroke="#7b8ca3" stroke-width="1"/></svg>
<div class="t" style="left:382px;top:102px;color:#000;font-weight:normal;font-size:12px">Schedules</div>
<svg style="left:463px;top:96px" width="76" height="23" viewBox="0 0 76 23"><path d="M1 23V6L6 1H75V23Z" fill="#fb9a4b"/><path d="M1.5 23V6L6 1.5H74.5" fill="none" stroke="#fff" stroke-width="1"/><path d="M0.5 23V5.5L5.5 0.5H75.5V23" fill="none" stroke="#7b8ca3" stroke-width="1"/></svg>
<div class="t" style="left:468px;top:102px;color:#000;font-weight:normal;font-size:12px">Shipping</div>
<svg style="left:539px;top:96px" width="64" height="23" viewBox="0 0 64 23"><path d="M1 23V6L6 1H63V23Z" fill="#fb9a4b"/><path d="M1.5 23V6L6 1.5H62.5" fill="none" stroke="#fff" stroke-width="1"/><path d="M0.5 23V5.5L5.5 0.5H63.5V23" fill="none" stroke="#7b8ca3" stroke-width="1"/></svg>
<div class="t" style="left:544px;top:102px;color:#000;font-weight:normal;font-size:12px">Return</div>
<svg style="left:603px;top:96px" width="75" height="23" viewBox="0 0 75 23"><path d="M1 23V6L6 1H74V23Z" fill="#fb9a4b"/><path d="M1.5 23V6L6 1.5H73.5" fill="none" stroke="#fff" stroke-width="1"/><path d="M0.5 23V5.5L5.5 0.5H74.5V23" fill="none" stroke="#7b8ca3" stroke-width="1"/></svg>
<div class="t" style="left:608px;top:102px;color:#000;font-weight:normal;font-size:12px">Payment</div>
<svg style="left:678px;top:96px" width="66" height="23" viewBox="0 0 66 23"><path d="M1 23V6L6 1H65V23Z" fill="#fb9a4b"/><path d="M1.5 23V6L6 1.5H64.5" fill="none" stroke="#fff" stroke-width="1"/><path d="M0.5 23V5.5L5.5 0.5H65.5V23" fill="none" stroke="#7b8ca3" stroke-width="1"/></svg>
<div class="t" style="left:683px;top:102px;color:#000;font-weight:normal;font-size:12px">Default</div>
<svg style="left:744px;top:96px" width="53" height="23" viewBox="0 0 53 23"><path d="M1 23V6L6 1H52V23Z" fill="#c64e2c"/><path d="M1.5 23V6L6 1.5H51.5" fill="none" stroke="#fff" stroke-width="1"/><path d="M0.5 23V5.5L5.5 0.5H52.5V23" fill="none" stroke="#5a88d0" stroke-width="1"/></svg>
<div class="t" style="left:749px;top:102px;color:#fff;font-weight:bold;font-size:12px">Cost</div>
<svg style="left:797px;top:96px" width="79" height="23" viewBox="0 0 79 23"><path d="M1 23V6L6 1H78V23Z" fill="#fb9a4b"/><path d="M1.5 23V6L6 1.5H77.5" fill="none" stroke="#fff" stroke-width="1"/><path d="M0.5 23V5.5L5.5 0.5H78.5V23" fill="none" stroke="#7b8ca3" stroke-width="1"/></svg>
<div class="t" style="left:802px;top:102px;color:#000;font-weight:normal;font-size:12px">Sub Total</div>
<svg style="left:876px;top:96px" width="61" height="23" viewBox="0 0 61 23"><path d="M1 23V6L6 1H60V23Z" fill="#fb9a4b"/><path d="M1.5 23V6L6 1.5H59.5" fill="none" stroke="#fff" stroke-width="1"/><path d="M0.5 23V5.5L5.5 0.5H60.5V23" fill="none" stroke="#7b8ca3" stroke-width="1"/></svg>
<div class="t" style="left:881px;top:102px;color:#000;font-weight:normal;font-size:12px">Status</div>
<div class="a" style="left:745px;top:118px;width:51px;height:4px;background:#c6dbf2"></div>
<div class="a" style="left:745px;top:117px;width:51px;height:1px;background:#c64e2c"></div>
<div class="a" style="left:19px;top:129px;width:89px;height:23px;border:1px solid #a6a6a6;background:#fff"></div>
<div class="t" style="left:19px;top:136px;width:89px;text-align:center;font-size:12px;color:#111">Refresh</div>
<div class="t" style="left:116px;top:131px;font-weight:bold;font-size:12px;color:#222">Equipment</div>
<div class="t" style="left:209px;top:131px;font-weight:bold;font-size:12px;color:#222">Sale</div>
<div class="t" style="left:299px;top:131px;font-weight:bold;font-size:12px;color:#222">Misc.</div>
<div class="t" style="left:389px;top:131px;font-weight:bold;font-size:12px;color:#222">Labor</div>
<div class="t" style="left:479px;top:131px;font-weight:bold;font-size:12px;color:#222">Freight</div>
<div class="t" style="left:569px;top:131px;font-weight:bold;font-size:12px;color:#222">Total</div>
<div class="t" style="left:660px;top:131px;font-weight:bold;font-size:12px;color:#222">SubRent</div>
<div class="a" style="left:349px;top:124px;width:29px;height:24px;border:1px solid #a8a8a8;background:#fff"></div>
<svg style="left:349px;top:124px" width="29" height="24" viewBox="0 0 29 24"><path d="M17 14L22.5 19.5" stroke="#6a5a50" stroke-width="3.6" stroke-linecap="round"/><path d="M17 14L22.5 19.5" stroke="#f0a050" stroke-width="2.2" stroke-linecap="round"/><circle cx="13" cy="10" r="5.2" fill="#d8eefc" stroke="#6f90aa" stroke-width="1.6"/><circle cx="12" cy="9" r="2" fill="#fff" opacity="0.8"/></svg>
<div class="a" style="left:437px;top:124px;width:29px;height:24px;border:1px solid #a8a8a8;background:#fff"></div>
<svg style="left:437px;top:124px" width="29" height="24" viewBox="0 0 29 24"><path d="M17 14L22.5 19.5" stroke="#6a5a50" stroke-width="3.6" stroke-linecap="round"/><path d="M17 14L22.5 19.5" stroke="#f0a050" stroke-width="2.2" stroke-linecap="round"/><circle cx="13" cy="10" r="5.2" fill="#d8eefc" stroke="#6f90aa" stroke-width="1.6"/><circle cx="12" cy="9" r="2" fill="#fff" opacity="0.8"/></svg>
<div class="t" style="left:19px;top:156px;font-weight:bold;font-size:12px;color:#222">Quoted</div>
<div class="t" style="left:19px;top:178px;font-weight:bold;font-size:12px;color:#222">Charge</div>
<div class="t" style="left:19px;top:200px;font-weight:bold;font-size:12px;color:#222">Discount</div>
<div class="t" style="left:19px;top:222px;font-weight:bold;font-size:12px;color:#222">Dark Days Disc.</div>
<div class="t" style="left:19px;top:244px;font-weight:bold;font-size:12px;color:#222">Total Disc.</div>
<div class="t" style="left:19px;top:266px;font-weight:bold;font-size:12px;color:#222">MB Disc</div>
<div class="t" style="left:19px;top:288px;font-weight:bold;font-size:12px;color:#222">Cost</div>
<div class="t" style="left:19px;top:310px;font-weight:bold;font-size:12px;color:#222">Profit (Margin)</div>
<div class="a" style="left:114px;top:149px;width:90px;height:22px;border:1px solid #7f7f7f;background:#eeeeee"></div>
<div class="t" style="left:116px;top:155px;font-size:12px;color:#222">0.00</div>
<div class="a" style="left:204px;top:149px;width:90px;height:22px;border:1px solid #7f7f7f;background:#eeeeee"></div>
<div class="t" style="left:206px;top:155px;font-size:12px;color:#222">0.00</div>
<div class="a" style="left:294px;top:149px;width:90px;height:22px;border:1px solid #7f7f7f;background:#eeeeee"></div>
<div class="t" style="left:296px;top:155px;font-size:12px;color:#222">0.00</div>
<div class="a" style="left:384px;top:149px;width:90px;height:22px;border:1px solid #7f7f7f;background:#eeeeee"></div>
<div class="t" style="left:386px;top:155px;font-size:12px;color:#222">0.00</div>
<div class="a" style="left:474px;top:149px;width:90px;height:22px;border:1px solid #7f7f7f;background:#eeeeee"></div>
<div class="t" style="left:476px;top:155px;font-size:12px;color:#222">0.00</div>
<div class="a" style="left:564px;top:149px;width:90px;height:22px;border:1px solid #7f7f7f;background:#eeeeee"></div>
<div class="t" style="left:566px;top:155px;font-size:12px;color:#222">0.00</div>
<div class="a" style="left:654px;top:149px;width:90px;height:22px;border:1px solid #7f7f7f;background:#eeeeee"></div>
<div class="t" style="left:656px;top:155px;font-size:12px;color:#222">0.00</div>
<div class="a" style="left:114px;top:171px;width:90px;height:22px;border:1px solid #7f7f7f;background:#eeeeee"></div>
<div class="t" style="left:116px;top:177px;font-size:12px;color:#222">100.00</div>
<div class="a" style="left:204px;top:171px;width:90px;height:22px;border:1px solid #7f7f7f;background:#eeeeee"></div>
<div class="t" style="left:206px;top:177px;font-size:12px;color:#222">0.00</div>
<div class="a" style="left:294px;top:171px;width:90px;height:22px;border:1px solid #7f7f7f;background:#eeeeee"></div>
<div class="t" style="left:296px;top:177px;font-size:12px;color:#222">0.00</div>
<div class="a" style="left:384px;top:171px;width:90px;height:22px;border:1px solid #7f7f7f;background:#eeeeee"></div>
<div class="t" style="left:386px;top:177px;font-size:12px;color:#222">0.00</div>
<div class="a" style="left:474px;top:171px;width:90px;height:22px;border:1px solid #7f7f7f;background:#eeeeee"></div>
<div class="t" style="left:476px;top:177px;font-size:12px;color:#222">0.00</div>
<div class="a" style="left:564px;top:171px;width:90px;height:22px;border:1px solid #7f7f7f;background:#eeeeee"></div>
<div class="t" style="left:566px;top:177px;font-size:12px;color:#222">100.00</div>
<div class="a" style="left:654px;top:171px;width:90px;height:22px;border:1px solid #7f7f7f;background:#eeeeee"></div>
<div class="t" style="left:656px;top:177px;font-size:12px;color:#222">0.00</div>
<div class="a" style="left:114px;top:193px;width:90px;height:22px;border:1px solid #7f7f7f;background:#eeeeee"></div>
<div class="t" style="left:116px;top:199px;font-size:12px;color:#222">0.00</div>
<div class="a" style="left:204px;top:193px;width:90px;height:22px;border:1px solid #7f7f7f;background:#eeeeee"></div>
<div class="t" style="left:206px;top:199px;font-size:12px;color:#222">0.00</div>
<div class="a" style="left:294px;top:193px;width:90px;height:22px;border:1px solid #7f7f7f;background:#eeeeee"></div>
<div class="t" style="left:296px;top:199px;font-size:12px;color:#222">0.00</div>
<div class="a" style="left:384px;top:193px;width:90px;height:22px;border:1px solid #7f7f7f;background:#eeeeee"></div>
<div class="t" style="left:386px;top:199px;font-size:12px;color:#222">0.00</div>
<div class="a" style="left:474px;top:193px;width:90px;height:22px;border:1px solid #7f7f7f;background:#eeeeee"></div>
<div class="t" style="left:476px;top:199px;font-size:12px;color:#222">0.00</div>
<div class="a" style="left:564px;top:193px;width:90px;height:22px;border:1px solid #7f7f7f;background:#eeeeee"></div>
<div class="t" style="left:566px;top:199px;font-size:12px;color:#222">0.00</div>
<div class="a" style="left:654px;top:193px;width:90px;height:22px;border:1px solid #7f7f7f;background:#eeeeee"></div>
<div class="t" style="left:656px;top:199px;font-size:12px;color:#222">0.00</div>
<div class="a" style="left:114px;top:215px;width:90px;height:22px;border:1px solid #7f7f7f;background:#eeeeee"></div>
<div class="t" style="left:116px;top:221px;font-size:12px;color:#222">0.00</div>
<div class="a" style="left:204px;top:215px;width:90px;height:22px;border:1px solid #7f7f7f;background:#eeeeee"></div>
<div class="t" style="left:206px;top:221px;font-size:12px;color:#222">0.00</div>
<div class="a" style="left:294px;top:215px;width:90px;height:22px;border:1px solid #7f7f7f;background:#eeeeee"></div>
<div class="t" style="left:296px;top:221px;font-size:12px;color:#222">0.00</div>
<div class="a" style="left:384px;top:215px;width:90px;height:22px;border:1px solid #7f7f7f;background:#eeeeee"></div>
<div class="t" style="left:386px;top:221px;font-size:12px;color:#222">0.00</div>
<div class="a" style="left:474px;top:215px;width:90px;height:22px;border:1px solid #7f7f7f;background:#eeeeee"></div>
<div class="t" style="left:476px;top:221px;font-size:12px;color:#222">0.00</div>
<div class="a" style="left:564px;top:215px;width:90px;height:22px;border:1px solid #7f7f7f;background:#eeeeee"></div>
<div class="t" style="left:566px;top:221px;font-size:12px;color:#222">0.00</div>
<div class="a" style="left:654px;top:215px;width:90px;height:22px;border:1px solid #7f7f7f;background:#eeeeee"></div>
<div class="t" style="left:656px;top:221px;font-size:12px;color:#222">0.00</div>
<div class="a" style="left:114px;top:237px;width:90px;height:22px;border:1px solid #7f7f7f;background:#eeeeee"></div>
<div class="t" style="left:115px;top:244px;font-size:10.4px;color:#222">0 (0%)</div>
<div class="a" style="left:204px;top:237px;width:90px;height:22px;border:1px solid #7f7f7f;background:#eeeeee"></div>
<div class="t" style="left:205px;top:244px;font-size:10.4px;color:#222">0 (0%)</div>
<div class="a" style="left:294px;top:237px;width:90px;height:22px;border:1px solid #7f7f7f;background:#eeeeee"></div>
<div class="t" style="left:295px;top:244px;font-size:10.4px;color:#222">0 (0%)</div>
<div class="a" style="left:384px;top:237px;width:90px;height:22px;border:1px solid #7f7f7f;background:#eeeeee"></div>
<div class="t" style="left:385px;top:244px;font-size:10.4px;color:#222">0 (0%)</div>
<div class="a" style="left:474px;top:237px;width:90px;height:22px;border:1px solid #7f7f7f;background:#eeeeee"></div>
<div class="t" style="left:475px;top:244px;font-size:10.4px;color:#222">0 (0%)</div>
<div class="a" style="left:564px;top:237px;width:90px;height:22px;border:1px solid #7f7f7f;background:#eeeeee"></div>
<div class="t" style="left:565px;top:244px;font-size:10.4px;color:#222">0 (0%)</div>
<div class="a" style="left:654px;top:237px;width:90px;height:22px;border:1px solid #7f7f7f;background:#eeeeee"></div>
<div class="t" style="left:655px;top:244px;font-size:10.4px;color:#222;font-weight:bold">0 (0%)</div>
<div class="a" style="left:114px;top:259px;width:90px;height:22px;border:1px solid #7f7f7f;background:#eeeeee"></div>
<div class="t" style="left:115px;top:266px;font-size:10.4px;color:#222">0.00</div>
<div class="a" style="left:204px;top:259px;width:90px;height:22px;border:1px solid #7f7f7f;background:#eeeeee"></div>
<div class="t" style="left:205px;top:266px;font-size:10.4px;color:#222">0.00</div>
<div class="a" style="left:294px;top:259px;width:90px;height:22px;border:1px solid #7f7f7f;background:#eeeeee"></div>
<div class="t" style="left:295px;top:266px;font-size:10.4px;color:#222">0.00</div>
<div class="a" style="left:384px;top:259px;width:90px;height:22px;border:1px solid #7f7f7f;background:#eeeeee"></div>
<div class="t" style="left:385px;top:266px;font-size:10.4px;color:#222">0.00</div>
<div class="a" style="left:474px;top:259px;width:90px;height:22px;border:1px solid #7f7f7f;background:#eeeeee"></div>
<div class="t" style="left:475px;top:266px;font-size:10.4px;color:#222">0.00</div>
<div class="a" style="left:564px;top:259px;width:90px;height:22px;border:1px solid #7f7f7f;background:#eeeeee"></div>
<div class="t" style="left:565px;top:266px;font-size:10.4px;color:#222">0.00</div>
<div class="a" style="left:654px;top:259px;width:90px;height:22px;border:1px solid #7f7f7f;background:#eeeeee"></div>
<div class="t" style="left:655px;top:266px;font-size:10.4px;color:#222">0.00</div>
<div class="a" style="left:114px;top:281px;width:90px;height:22px;border:1px solid #7f7f7f;background:#eeeeee"></div>
<div class="t" style="left:116px;top:287px;font-size:12px;color:#222">50.00</div>
<div class="a" style="left:204px;top:281px;width:90px;height:22px;border:1px solid #7f7f7f;background:#eeeeee"></div>
<div class="t" style="left:206px;top:287px;font-size:12px;color:#222">0.00</div>
<div class="a" style="left:294px;top:281px;width:90px;height:22px;border:1px solid #7f7f7f;background:#eeeeee"></div>
<div class="t" style="left:296px;top:287px;font-size:12px;color:#222">0.00</div>
<div class="a" style="left:384px;top:281px;width:90px;height:22px;border:1px solid #7f7f7f;background:#eeeeee"></div>
<div class="t" style="left:386px;top:287px;font-size:12px;color:#222">0.00</div>
<div class="a" style="left:474px;top:281px;width:90px;height:22px;border:1px solid #7f7f7f;background:#eeeeee"></div>
<div class="t" style="left:476px;top:287px;font-size:12px;color:#222">0.00</div>
<div class="a" style="left:564px;top:281px;width:90px;height:22px;border:1px solid #7f7f7f;background:#eeeeee"></div>
<div class="t" style="left:566px;top:287px;font-size:12px;color:#222">50.00</div>
<div class="a" style="left:654px;top:281px;width:90px;height:22px;border:1px solid #7f7f7f;background:#eeeeee"></div>
<div class="t" style="left:656px;top:287px;font-size:12px;color:#222">0.00</div>
<div class="a" style="left:114px;top:303px;width:90px;height:22px;border:1px solid #7f7f7f;background:#eeeeee"></div>
<div class="t" style="left:115px;top:310px;font-size:10.4px;color:#222">50 (50%)</div>
<div class="a" style="left:204px;top:303px;width:90px;height:22px;border:1px solid #7f7f7f;background:#eeeeee"></div>
<div class="t" style="left:205px;top:310px;font-size:10.4px;color:#222">0 (0%)</div>
<div class="a" style="left:294px;top:303px;width:90px;height:22px;border:1px solid #7f7f7f;background:#eeeeee"></div>
<div class="t" style="left:295px;top:310px;font-size:10.4px;color:#222">0 (0%)</div>
<div class="a" style="left:384px;top:303px;width:90px;height:22px;border:1px solid #7f7f7f;background:#eeeeee"></div>
<div class="t" style="left:385px;top:310px;font-size:10.4px;color:#222">0 (0%)</div>
<div class="a" style="left:474px;top:303px;width:90px;height:22px;border:1px solid #7f7f7f;background:#eeeeee"></div>
<div class="t" style="left:475px;top:310px;font-size:10.4px;color:#222">0 (0%)</div>
<div class="a" style="left:564px;top:303px;width:90px;height:22px;border:1px solid #7f7f7f;background:#eeeeee"></div>
<div class="t" style="left:565px;top:310px;font-size:10.4px;color:#222">50 (50%)</div>
<div class="a" style="left:654px;top:303px;width:90px;height:22px;border:1px solid #7f7f7f;background:#eeeeee"></div>
<div class="t" style="left:655px;top:310px;font-size:10.4px;color:#222">0 (0%)</div>
<div class="a" style="left:15px;top:280px;width:190px;height:24px;border:2px solid #b01a1a"></div>
<div class="a" style="left:796px;top:164px;width:159px;height:23px;border:1px solid #a8a8a8;background:#fff"></div>
<div class="t" style="left:796px;top:171px;width:159px;text-align:center;font-size:12px;color:#8d8d8d">Distribute Revenue</div>
<div class="a" style="left:766px;top:201px;width:235px;height:115px;border:1px solid #b4b4b4"></div>
<div class="t" style="left:771px;top:197px;font-weight:bold;font-size:12px;color:#111;background:#fff;padding:0 2px">Compare With Actual Price</div>
<div class="t" style="left:774px;top:222px;font-size:12px;color:#222">Difference Amt</div>
<div class="t" style="left:774px;top:252px;font-size:12px;color:#222">% Of Difference</div>
<div class="a" style="left:876px;top:216px;width:110px;height:24px;border:1px solid #6c6c6c;background:#eeeeee"></div>
<div class="a" style="left:876px;top:246px;width:110px;height:24px;border:1px solid #6c6c6c;background:#eeeeee"></div>
<div class="a" style="left:886px;top:281px;width:89px;height:23px;border:1px solid #a6a6a6;background:#fff"></div>
<div class="t" style="left:886px;top:288px;width:89px;text-align:center;font-size:12px;color:#111">C<u>a</u>lculate</div>
<div class="a" style="left:8px;top:356px;width:1059px;height:315px;background:#c6dbf2;border-left:1px solid #6b8fcb;border-top:1px solid #6b8fcb;border-right:1px solid #7a8ba0;border-bottom:1px solid #7a8ba0"></div>
<div class="a" style="left:10px;top:360px;width:1053px;height:307px;background:#fff;border:1px solid #a8a8a8"></div>
<div class="a" style="left:12px;top:362px;width:1049px;height:303px;background:#fff;border:1px solid #6f8096"></div>
<svg style="left:77px;top:334px" width="58" height="22" viewBox="0 0 58 22"><path d="M1 22V6L6 1H57V22Z" fill="#fb9a4b"/><path d="M1.5 22V6L6 1.5H56.5" fill="none" stroke="#fff" stroke-width="1"/><path d="M0.5 22V5.5L5.5 0.5H57.5V22" fill="none" stroke="#7b8ca3" stroke-width="1"/></svg>
<div class="t" style="left:82px;top:341px;color:#000;font-weight:normal;font-size:12px">Labor</div>
<svg style="left:10px;top:334px" width="67" height="22" viewBox="0 0 67 22"><path d="M1 22V6L6 1H66V22Z" fill="#c64e2c"/><path d="M1.5 22V6L6 1.5H65.5" fill="none" stroke="#fff" stroke-width="1"/><path d="M0.5 22V5.5L5.5 0.5H66.5V22" fill="none" stroke="#5a88d0" stroke-width="1"/></svg>
<div class="t" style="left:15px;top:341px;color:#fff;font-weight:bold;font-size:12px">Item(s)</div>
<div class="a" style="left:11px;top:356px;width:65px;height:4px;background:#c6dbf2"></div>
<div class="a" style="left:11px;top:355px;width:65px;height:1px;background:#c64e2c"></div>
<div class="a" style="left:13px;top:363px;width:1047px;height:300px;overflow:hidden">
<div class="a" style="left:-1px;top:-1px;width:1100px;height:20px;background:#8d3b20"></div>
<div class="a" style="left:0px;top:0px;width:14px;height:19px;background:#c54e2d;border:1px solid #f56b3b;box-sizing:border-box;border-right-color:#f56b3b"></div>
<div class="t" style="left:0px;top:5px;width:14px;text-align:center;color:#fff;font-size:12px;overflow:hidden">C</div>
<div class="a" style="left:15px;top:0px;width:19px;height:19px;background:#c54e2d;border:1px solid #f56b3b;box-sizing:border-box;border-right-color:#f56b3b"></div>
<div class="t" style="left:15px;top:5px;width:19px;text-align:center;color:#fff;font-size:12px;overflow:hidden">L</div>
<div class="a" style="left:35px;top:0px;width:14px;height:19px;background:#c54e2d;border:1px solid #f56b3b;box-sizing:border-box;border-right-color:#f56b3b"></div>
<div class="t" style="left:35px;top:5px;width:14px;text-align:center;color:#fff;font-size:12px;overflow:hidden">T</div>
<div class="a" style="left:50px;top:0px;width:24px;height:19px;background:#c54e2d;border:1px solid #f56b3b;box-sizing:border-box;border-right-color:#f56b3b"></div>
<div class="t" style="left:50px;top:5px;width:24px;text-align:center;color:#fff;font-size:12px;overflow:hidden">I.C</div>
<div class="a" style="left:75px;top:0px;width:24px;height:19px;background:#c54e2d;border:1px solid #f56b3b;box-sizing:border-box;border-right-color:#f56b3b"></div>
<div class="t" style="left:75px;top:5px;width:24px;text-align:center;color:#fff;font-size:12px;overflow:hidden">I.I</div>
<div class="a" style="left:100px;top:0px;width:24px;height:19px;background:#c54e2d;border:1px solid #f56b3b;box-sizing:border-box;border-right-color:#f56b3b"></div>
<div class="t" style="left:100px;top:5px;width:24px;text-align:center;color:#fff;font-size:12px;overflow:hidden">I.W</div>
<div class="a" style="left:125px;top:0px;width:14px;height:19px;background:#c54e2d;border:1px solid #f56b3b;box-sizing:border-box;border-right-color:#f56b3b"></div>
<div class="t" style="left:125px;top:5px;width:14px;text-align:center;color:#fff;font-size:12px;overflow:hidden">S</div>
<div class="a" style="left:140px;top:0px;width:74px;height:19px;background:#c54e2d;border:1px solid #f56b3b;box-sizing:border-box;border-right-color:#f56b3b"></div>
<div class="t" style="left:140px;top:5px;width:74px;text-align:center;color:#fff;font-size:12px;overflow:hidden">Status</div>
<div class="a" style="left:215px;top:0px;width:44px;height:19px;background:#c54e2d;border:1px solid #f56b3b;box-sizing:border-box;border-right-color:#f56b3b"></div>
<div class="t" style="left:215px;top:5px;width:44px;text-align:center;color:#fff;font-size:12px;overflow:hidden">Action</div>
<div class="a" style="left:260px;top:0px;width:99px;height:19px;background:#c54e2d;border:1px solid #f56b3b;box-sizing:border-box;border-right-color:#f56b3b"></div>
<div class="t" style="left:260px;top:5px;width:99px;text-align:center;color:#fff;font-size:12px;overflow:hidden">Product ID</div>
<div class="a" style="left:360px;top:0px;width:259px;height:19px;background:#c54e2d;border:1px solid #f56b3b;box-sizing:border-box;border-right-color:#f56b3b"></div>
<div class="t" style="left:360px;top:5px;width:259px;text-align:center;color:#fff;font-size:12px;overflow:hidden">Description</div>
<div class="a" style="left:620px;top:0px;width:54px;height:19px;background:#c54e2d;border:1px solid #f56b3b;box-sizing:border-box;border-right-color:#f56b3b"></div>
<div class="t" style="left:620px;top:5px;width:54px;text-align:center;color:#fff;font-size:12px;overflow:hidden">Duration</div>
<div class="a" style="left:675px;top:0px;width:29px;height:19px;background:#c54e2d;border:1px solid #f56b3b;box-sizing:border-box;border-right-color:#f56b3b"></div>
<div class="t" style="left:675px;top:5px;width:29px;text-align:center;color:#fff;font-size:12px;overflow:hidden">Qty</div>
<div class="a" style="left:705px;top:0px;width:59px;height:19px;background:#c54e2d;border:1px solid #f56b3b;box-sizing:border-box;border-right-color:#f56b3b"></div>
<div class="t" style="left:705px;top:5px;width:59px;text-align:center;color:#fff;font-size:12px;overflow:hidden">Unit Price</div>
<div class="a" style="left:765px;top:0px;width:54px;height:19px;background:#c54e2d;border:1px solid #f56b3b;box-sizing:border-box;border-right-color:#f56b3b"></div>
<div class="t" style="left:765px;top:5px;width:54px;text-align:center;color:#fff;font-size:12px;overflow:hidden">Discount</div>
<div class="a" style="left:820px;top:0px;width:59px;height:19px;background:#c54e2d;border:1px solid #f56b3b;box-sizing:border-box;border-right-color:#f56b3b"></div>
<div class="t" style="left:820px;top:5px;width:59px;text-align:center;color:#fff;font-size:12px;overflow:hidden">Net Disc</div>
<div class="a" style="left:880px;top:0px;width:59px;height:19px;background:#c54e2d;border:1px solid #f56b3b;box-sizing:border-box;border-right-color:#f56b3b"></div>
<div class="t" style="left:880px;top:5px;width:59px;text-align:center;color:#fff;font-size:12px;overflow:hidden">Net Each</div>
<div class="a" style="left:940px;top:0px;width:74px;height:19px;background:#c54e2d;border:1px solid #f56b3b;box-sizing:border-box;border-right-color:#f56b3b"></div>
<div class="t" style="left:940px;top:5px;width:74px;text-align:center;color:#fff;font-size:12px;overflow:hidden">Amount</div>
<div class="a" style="left:1015px;top:0px;width:72px;height:19px;background:#c54e2d;border:1px solid #f56b3b;box-sizing:border-box;border-right-color:#f56b3b"></div>
<div class="t" style="left:1015px;top:5px;width:72px;text-align:center;color:#fff;font-size:12px;overflow:hidden">Unit Price</div>
<div class="a" style="left:-1px;top:19px;width:1100px;height:1px;background:#f26a3a"></div>
<div class="a" style="left:-1px;top:20px;width:1100px;height:18px;background:#fb9a48"></div>
<div class="a" style="left:-1px;top:38px;width:1100px;height:1px;background:#c0783a"></div>
<div class="a" style="left:14px;top:20px;width:1px;height:18px;background:#c0783a"></div>
<div class="a" style="left:34px;top:20px;width:1px;height:18px;background:#c0783a"></div>
<div class="a" style="left:49px;top:20px;width:1px;height:18px;background:#c0783a"></div>
<div class="a" style="left:74px;top:20px;width:1px;height:18px;background:#c0783a"></div>
<div class="a" style="left:99px;top:20px;width:1px;height:18px;background:#c0783a"></div>
<div class="a" style="left:124px;top:20px;width:1px;height:18px;background:#c0783a"></div>
<div class="a" style="left:139px;top:20px;width:1px;height:18px;background:#c0783a"></div>
<div class="a" style="left:214px;top:20px;width:1px;height:18px;background:#c0783a"></div>
<div class="a" style="left:259px;top:20px;width:1px;height:18px;background:#c0783a"></div>
<div class="a" style="left:359px;top:20px;width:1px;height:18px;background:#c0783a"></div>
<div class="a" style="left:619px;top:20px;width:1px;height:18px;background:#c0783a"></div>
<div class="a" style="left:674px;top:20px;width:1px;height:18px;background:#c0783a"></div>
<div class="a" style="left:704px;top:20px;width:1px;height:18px;background:#c0783a"></div>
<div class="a" style="left:764px;top:20px;width:1px;height:18px;background:#c0783a"></div>
<div class="a" style="left:819px;top:20px;width:1px;height:18px;background:#c0783a"></div>
<div class="a" style="left:879px;top:20px;width:1px;height:18px;background:#c0783a"></div>
<div class="a" style="left:939px;top:20px;width:1px;height:18px;background:#c0783a"></div>
<div class="a" style="left:1014px;top:20px;width:1px;height:18px;background:#c0783a"></div>
<div class="a" style="left:1px;top:23px;width:13px;height:13px;border:1px solid #fff;box-shadow:inset 0 0 0 1px #5b6c80;background:linear-gradient(135deg,#fde2cc 0%,#f58a3a 100%)"></div>
<div class="a" style="left:18px;top:23px;width:13px;height:13px;border:1px solid #fff;box-shadow:inset 0 0 0 1px #5b6c80;background:linear-gradient(135deg,#fde2cc 0%,#f58a3a 100%)"></div>
<div class="a" style="left:35px;top:23px;width:13px;height:13px;border:1px solid #fff;box-shadow:inset 0 0 0 1px #5b6c80;background:linear-gradient(135deg,#fde2cc 0%,#f58a3a 100%)"></div>
<div class="a" style="left:55px;top:23px;width:13px;height:13px;border:1px solid #fff;box-shadow:inset 0 0 0 1px #5b6c80;background:linear-gradient(135deg,#fde2cc 0%,#f58a3a 100%)"></div>
<div class="a" style="left:80px;top:23px;width:13px;height:13px;border:1px solid #fff;box-shadow:inset 0 0 0 1px #5b6c80;background:linear-gradient(135deg,#fde2cc 0%,#f58a3a 100%)"></div>
<div class="a" style="left:105px;top:23px;width:13px;height:13px;border:1px solid #fff;box-shadow:inset 0 0 0 1px #5b6c80;background:linear-gradient(135deg,#fde2cc 0%,#f58a3a 100%)"></div>
<div class="a" style="left:125px;top:23px;width:13px;height:13px;border:1px solid #fff;box-shadow:inset 0 0 0 1px #5b6c80;background:linear-gradient(135deg,#fde2cc 0%,#f58a3a 100%)"></div>
<svg style="left:37px;top:25px" width="10" height="10" viewBox="0 0 10 10"><path d="M2 5.5L3.5 8L8 2" stroke="#1a1a1a" stroke-width="1.8" fill="none"/></svg>
<div class="t" style="left:141px;top:24px;font-size:12px;color:#111">Deleted</div>
<div class="t" style="left:216px;top:24px;font-size:12px;color:#111">Rent</div>
<div class="t" style="left:261px;top:24px;font-size:12px;color:#111">ITEMA#1</div>
<div class="t" style="left:367px;top:24px;font-size:12px;color:#111">ITEMA#1</div>
<div class="t" style="left:622px;top:24px;font-size:12px;color:#111">1d</div>
<div class="t" style="left:621px;top:24px;width:80px;text-align:right;font-size:12px;color:#111">1</div>
<div class="t" style="left:682px;top:24px;width:80px;text-align:right;font-size:12px;color:#111">100.00</div>
<div class="t" style="left:737px;top:24px;width:80px;text-align:right;font-size:12px;color:#111">0.00</div>
<div class="t" style="left:797px;top:24px;width:80px;text-align:right;font-size:12px;color:#111">0.00</div>
<div class="t" style="left:857px;top:24px;width:80px;text-align:right;font-size:12px;color:#111">100.00</div>
<div class="t" style="left:932px;top:24px;width:80px;text-align:right;font-size:12px;color:#111">100.00</div>
</div>
<div class="a" style="left:1000px;top:386px;width:50px;height:18px;background:#fb9a48;border:1px solid #6a8acb"></div>
<div class="t" style="left:1004px;top:390px;font-size:12px;color:#111">Amount</div>
<div class="a" style="left:13px;top:647px;width:1047px;height:16px;background:#eeeeee;border-top:1px solid #6f8096;border-bottom:1px solid #6f8096"></div>
<div class="a" style="left:13px;top:648px;width:15px;height:14px;background:#eeeeee;border-top:1px solid #fff;border-left:1px solid #fff"></div>
<svg style="left:13px;top:647px" width="16" height="16"><path d="M5.5 8.5L10 4.5V12.5Z" fill="#222"/></svg>
<div class="a" style="left:1043px;top:647px;width:17px;height:16px;background:#eeeeee;border:1px solid #6f8096;border-right-width:2px;border-top-color:#6f8096"></div>
<svg style="left:1043px;top:647px" width="16" height="16"><path d="M7 4.5L11.5 8.5L7 12.5Z" fill="#222"/></svg>
<div class="a" style="left:28px;top:647px;width:511px;height:16px;border:1px solid #ffc20e;box-shadow:inset 0 0 0 1px #f0b060;background:linear-gradient(170deg,#f0bc94 0%,#e9a070 100%)"></div>
<svg style="left:279px;top:650px" width="8" height="10"><path d="M1.5 0V10M3.5 0V10M5.5 0V10" stroke="#b08060" stroke-width="1"/></svg>
<div class="t" style="left:70px;top:679px;font-weight:bold;font-size:14px;color:#222">Items</div>
<div class="t" style="left:235px;top:679px;font-weight:bold;font-size:14px;color:#222">Labor</div>
<div class="t" style="left:446px;top:679px;font-weight:bold;font-size:14px;color:#222">Sub Total</div>
<div class="t" style="left:636px;top:679px;font-weight:bold;font-size:14px;color:#222">Tax</div>
<div class="a" style="left:120px;top:673px;width:100px;height:24px;border:1px solid #6c6c6c;background:#eeeeee"></div>
<div class="t" style="left:122px;top:678px;font-weight:bold;font-size:14px;color:#222">100.00</div>
<div class="a" style="left:287px;top:673px;width:100px;height:24px;border:1px solid #6c6c6c;background:#eeeeee"></div>
<div class="a" style="left:525px;top:673px;width:100px;height:24px;border:1px solid #6c6c6c;background:#eeeeee"></div>
<div class="t" style="left:527px;top:678px;font-weight:bold;font-size:14px;color:#222">100.00</div>
<div class="a" style="left:670px;top:673px;width:101px;height:24px;border:1px solid #6c6c6c;background:#eeeeee"></div>
<div class="t" style="left:672px;top:678px;font-weight:bold;font-size:14px;color:#222">20.00</div>
<div class="a" style="left:906px;top:673px;width:100px;height:24px;border:1px solid #6c6c6c;background:#eeeeee"></div>
<div class="t" style="left:908px;top:678px;font-weight:bold;font-size:14px;color:#222">120.00</div>
<div class="a" style="left:813px;top:673px;width:90px;height:24px;border:1px solid #a6a6a6;background:#fff"></div>
<div class="t" style="left:813px;top:679px;width:90px;text-align:center;font-weight:bold;font-size:14px;color:#111">Total</div>
<div class="a" style="left:9px;top:707px;width:1057px;height:24px;border:1px solid #8a8a8a;border-top:2px solid #8a8a8a;border-right-color:#d0d0d0;border-bottom-color:#d8d8d8;background:#fff"></div>
</body></html>
